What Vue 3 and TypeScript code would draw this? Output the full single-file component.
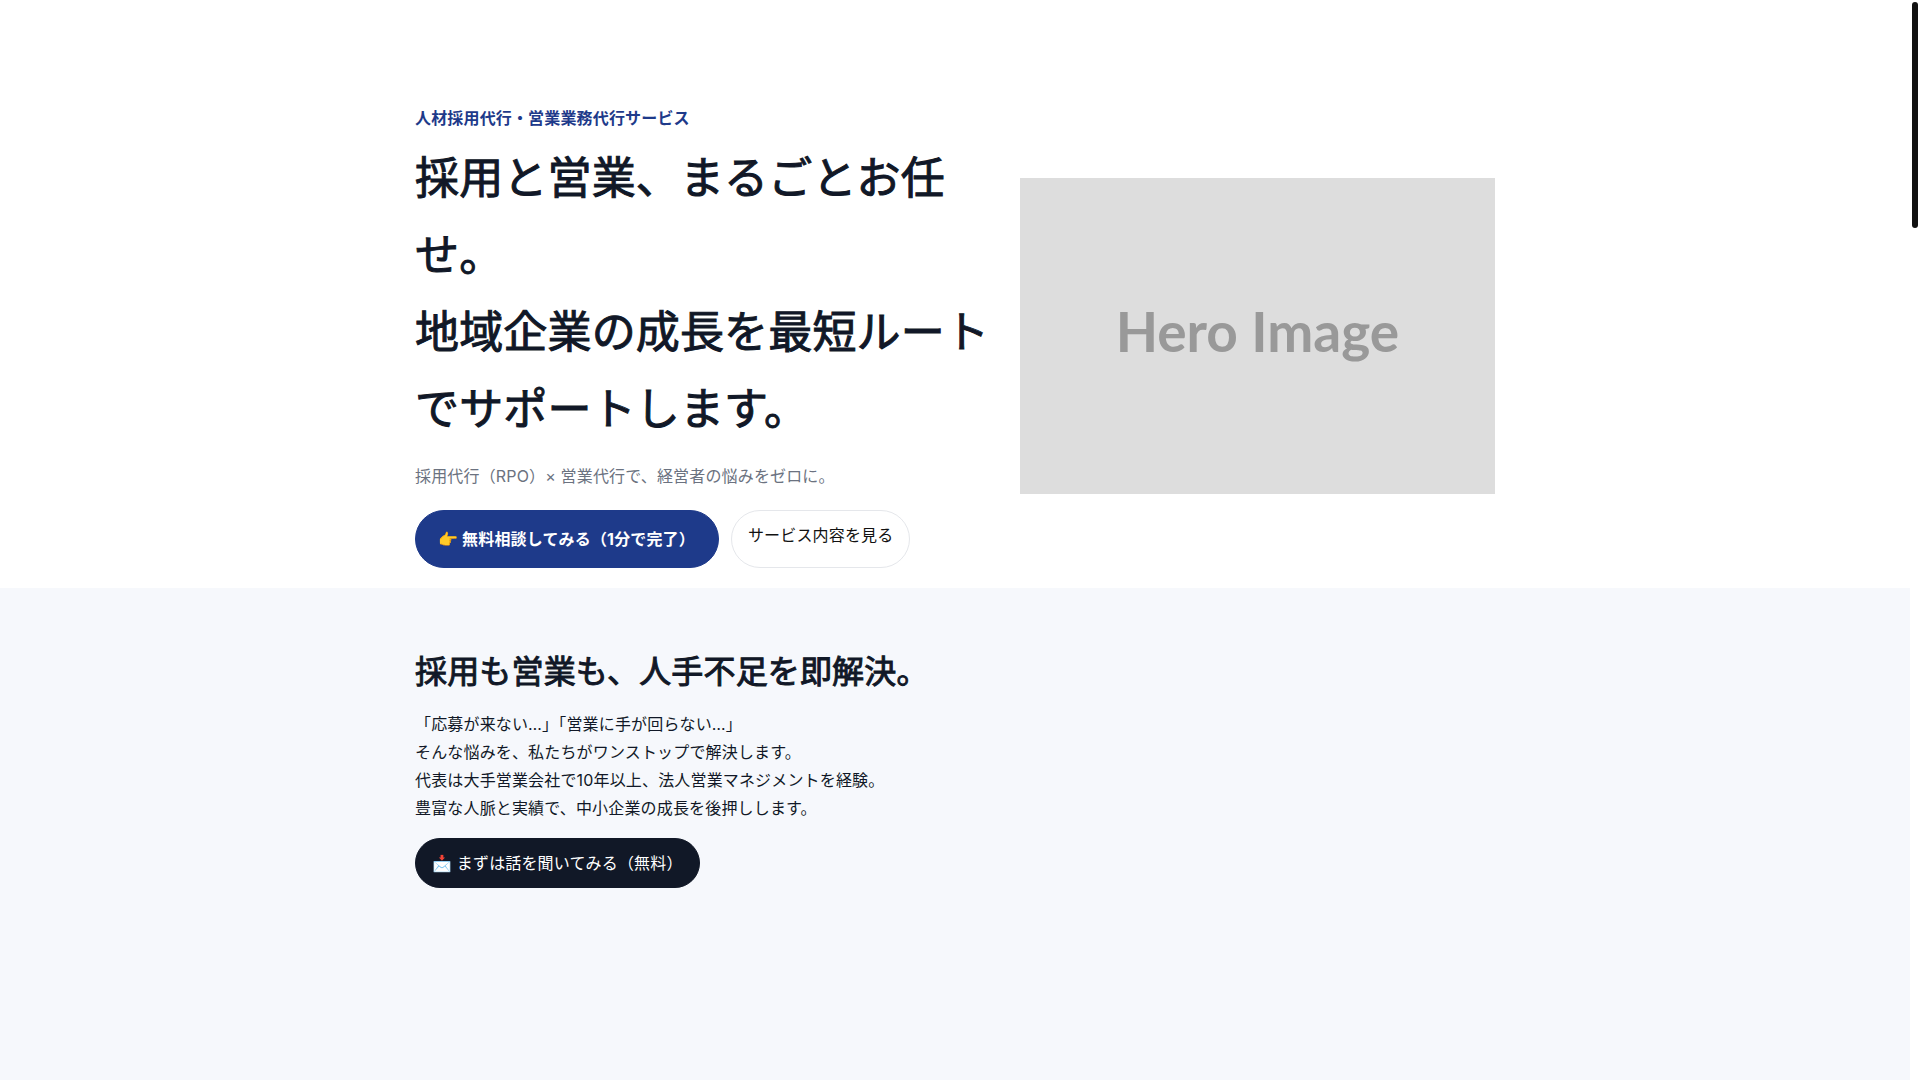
<script setup lang="ts">
const painPoints: string[] = [
  '「応募が来ない…」「営業に手が回らない…」',
  'そんな悩みを、私たちがワンストップで解決します。',
  '代表は大手営業会社で10年以上、法人営業マネジメントを経験。',
  '豊富な人脈と実績で、中小企業の成長を後押しします。',
]
</script>

<template>
  <div class="page">
    <header class="hero">
      <div class="container hero-grid">
        <div class="hero-copy">
          <p class="eyebrow">人材採用代行・営業業務代行サービス</p>
          <h1>採用と営業、まるごとお任せ。<br />地域企業の成長を最短ルートでサポートします。</h1>
          <p class="lead">採用代行（RPO）× 営業代行で、経営者の悩みをゼロに。</p>
          <div class="actions">
            <a class="btn btn-primary" href="#contact">👉 無料相談してみる（1分で完了）</a>
            <a class="btn btn-outline" href="#service">サービス内容を見る</a>
          </div>
        </div>
        <div class="hero-image" role="img" aria-label="Hero Image"><span>Hero Image</span></div>
      </div>
    </header>

    <main id="service" class="intro">
      <div class="container">
        <h2>採用も営業も、人手不足を即解決。</h2>
        <p class="intro-text">
          <template v-for="(line, i) in painPoints" :key="i"><br v-if="i > 0" />{{ line }}</template>
        </p>
        <a class="btn btn-dark" href="#contact">📩 まずは話を聞いてみる（無料）</a>
      </div>
    </main>

    <div class="scroll-thumb" aria-hidden="true"></div>
  </div>
</template>

<style>
body {
  margin: 0;
  background: #fff;
}
</style>

<style scoped>
.page {
  box-sizing: border-box;
  min-height: 100vh;
  padding-right: 10px;
  display: flex;
  flex-direction: column;
  font-family: Inter, 'Noto Sans CJK JP', sans-serif;
  font-size: 16px;
  line-height: 1.75;
  letter-spacing: 0.01em;
  color: #111827;
}

.container {
  max-width: 1080px;
  margin: 0 auto;
}

.hero {
  padding: 104px 20px 20px;
}

.hero-grid {
  display: grid;
  grid-template-columns: 1.1fr 0.9fr;
  gap: 24px;
  align-items: center;
}

.eyebrow {
  margin: 0 0 8px;
  font-weight: 700;
  color: #1e3a8a;
}

h1,
h2 {
  font-weight: 400;
  -webkit-text-stroke: 1px currentColor;
}

h1 {
  margin: 0 0 14px;
  font-size: 44px;
}

.lead {
  margin: 0 0 20px;
  color: #6b7280;
}

.actions {
  display: flex;
  flex-wrap: wrap;
  gap: 12px;
}

.btn {
  display: inline-block;
  padding: 10px 16px;
  border: 1px solid transparent;
  border-radius: 999px;
  text-decoration: none;
}

.btn-primary {
  padding: 14px 23px 14px 22px;
  border-color: #1e3a8a;
  background: #1e3a8a;
  color: #fff;
  font-weight: 700;
}

.btn-outline {
  border-color: #e5e7eb;
  color: #111;
}

.btn-dark {
  border-color: #111827;
  background: #111827;
  color: #fff;
}

.hero-image {
  box-sizing: border-box;
  aspect-ratio: 3 / 2;
  padding-bottom: 10px;
  display: flex;
  align-items: center;
  justify-content: center;
  background: #ddd;
  color: #999;
  font-family: Lato, sans-serif;
  font-size: 55px;
  font-weight: 700;
  line-height: 1;
  letter-spacing: normal;
}

.intro {
  flex: 1;
  padding: 56px 20px;
  background: #f6f8fc;
}

h2 {
  margin: 0 0 10px;
  font-size: 32px;
}

.intro-text {
  margin: 0 0 16px;
}

.scroll-thumb {
  position: fixed;
  top: 2px;
  right: 2px;
  width: 6px;
  height: 226px;
  border-radius: 3px;
  background: #111;
}
</style>
